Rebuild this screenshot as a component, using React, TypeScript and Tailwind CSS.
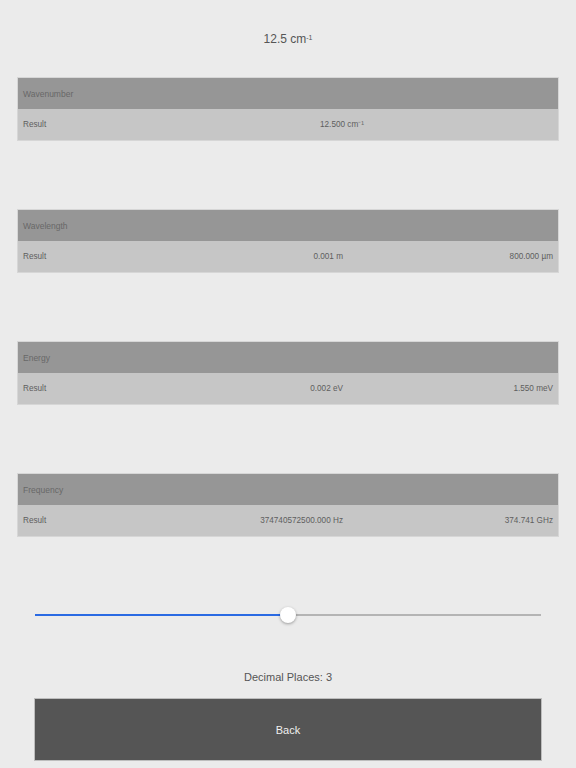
const font = { fontFamily: '"Liberation Sans", Arial, sans-serif' };

type Card = { title: string; mid: string; right?: string };

const cards: Card[] = [
  { title: 'Wavenumber', mid: '12.500 cm⁻¹' },
  { title: 'Wavelength', mid: '0.001 m', right: '800.000 µm' },
  { title: 'Energy', mid: '0.002 eV', right: '1.550 meV' },
  { title: 'Frequency', mid: '374740572500.000 Hz', right: '374.741 GHz' },
];

function ResultCard({ card }: { card: Card }) {
  return (
    <div className="w-[542px] border border-[#d6d6d6]">
      <div className="h-[31px] bg-[#969696] flex items-center px-[5px] pt-[2px] text-[8.5px] text-[#686868]">
        {card.title}
      </div>
      <div className="h-[31px] bg-[#c6c6c6] flex items-center px-[5px] pt-[2px] text-[8.2px] text-[#5e5e5e]">
        {card.right ? (
          <>
            <div className="w-[320px] flex justify-between">
              <span>Result</span>
              <span>{card.mid}</span>
            </div>
            <div className="flex-1 text-right">{card.right}</div>
          </>
        ) : (
          <>
            <div className="w-[259px]">Result</div>
            <div className="w-[120px] text-center">{card.mid}</div>
          </>
        )}
      </div>
    </div>
  );
}

export default function App() {
  return (
    <div className="w-[576px] h-[768px] bg-[#ebebeb] flex flex-col items-center overflow-hidden" style={font}>
      <div className="h-[77px] pt-[30px] text-[12px] text-[#555]">
        12.5 cm<sup className="text-[7px]">-1</sup>
      </div>
      <div className="flex flex-col gap-[68px]">
        {cards.map((c) => (
          <ResultCard key={c.title} card={c} />
        ))}
      </div>
      <div className="mt-[69px] w-[506px] h-[18px] relative flex items-center">
        <div className="h-[2px] w-[253px] bg-[#2a6ae3]" />
        <div className="h-[2px] flex-1 bg-[#b4b4b4]" />
        <div className="absolute left-[245px] top-[1px] w-[16px] h-[16px] rounded-full bg-white shadow-[0_1px_3px_rgba(0,0,0,0.35)]" />
      </div>
      <div className="mt-[45px] text-[11px] text-[#555]">Decimal Places: 3</div>
      <div className="mt-[12px] w-[508px] h-[63px] bg-[#555555] border border-[#bdbdbd] flex items-center justify-center pt-[3px] text-[11px] text-[#f0f0f0]">
        Back
      </div>
    </div>
  );
}
